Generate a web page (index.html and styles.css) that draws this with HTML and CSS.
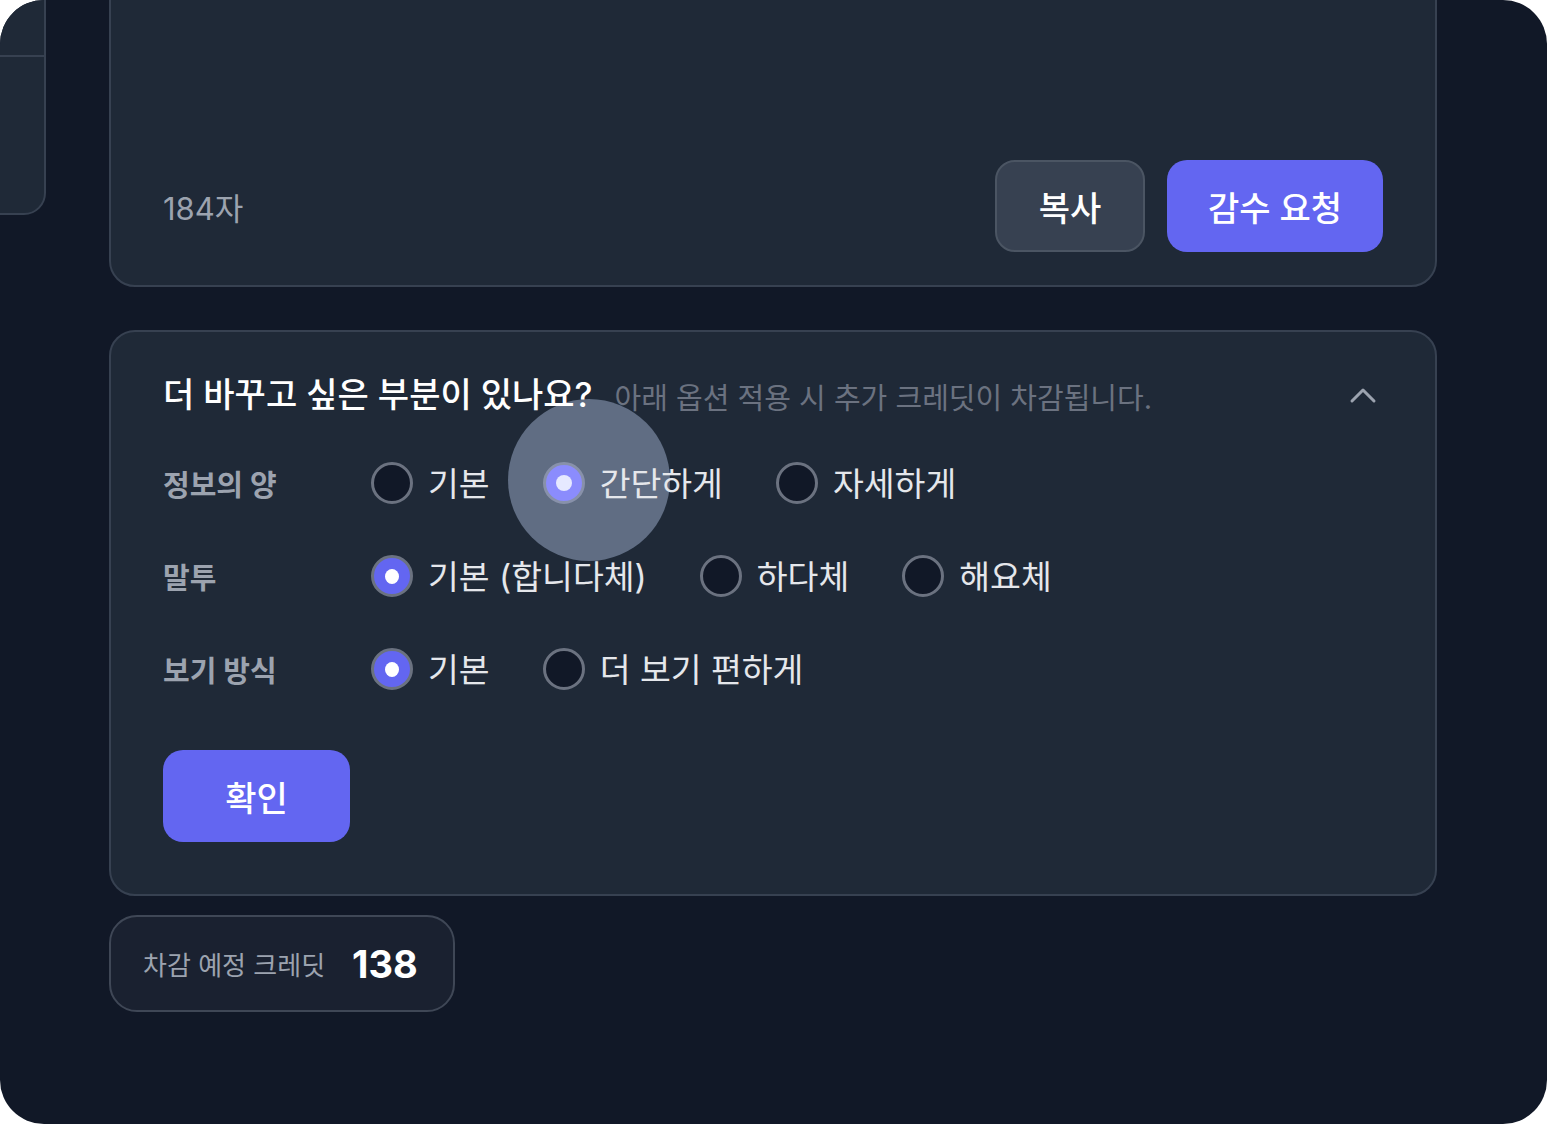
FILE: index.html
```html
<!DOCTYPE html>
<html lang="ko">
<head>
<meta charset="utf-8">
<title>감수 옵션</title>
<link rel="stylesheet" href="styles.css">
</head>
<body>
<div class="screen">
  <aside class="side">
    <div class="side-head"></div>
    <div class="side-body"></div>
  </aside>

  <main class="main">
    <section class="card editor">
      <div class="editor-text"></div>
      <div class="editor-foot">
        <span class="count">184자</span>
        <div class="actions">
          <button class="btn btn-ghost">복사</button>
          <button class="btn btn-primary btn-wide">감수 요청</button>
        </div>
      </div>
    </section>

    <section class="card options">
      <header class="options-head">
        <h2 class="options-title">더 바꾸고 싶은 부분이 있나요?</h2>
        <span class="options-note">아래 옵션 적용 시 추가 크레딧이 차감됩니다.</span>
        <svg class="chevron" width="28" height="18" viewBox="0 0 28 18" aria-hidden="true">
          <path d="M3 15 L14 4 L25 15" fill="none" stroke="#9ca3af" stroke-width="3" stroke-linecap="round" stroke-linejoin="round"/>
        </svg>
      </header>

      <div class="option-grid">
        <div class="option-label">정보의 양</div>
        <div class="option-set">
          <label class="opt"><span class="radio"></span><span class="opt-text">기본</span></label>
          <label class="opt opt-pressed"><span class="touch"></span><span class="radio on pressed"></span><span class="opt-text">간단하게</span></label>
          <label class="opt"><span class="radio"></span><span class="opt-text">자세하게</span></label>
        </div>

        <div class="option-label">말투</div>
        <div class="option-set">
          <label class="opt"><span class="radio on"></span><span class="opt-text">기본 (합니다체)</span></label>
          <label class="opt"><span class="radio"></span><span class="opt-text">하다체</span></label>
          <label class="opt"><span class="radio"></span><span class="opt-text">해요체</span></label>
        </div>

        <div class="option-label">보기 방식</div>
        <div class="option-set">
          <label class="opt"><span class="radio on"></span><span class="opt-text">기본</span></label>
          <label class="opt"><span class="radio"></span><span class="opt-text">더 보기 편하게</span></label>
        </div>
      </div>

      <button class="btn btn-primary btn-confirm">확인</button>
    </section>

    <div class="credit">
      <span class="credit-label">차감 예정 크레딧</span>
      <span class="credit-value">138</span>
    </div>
  </main>
</div>
</body>
</html>
```

FILE: styles.css
```css
* {
  box-sizing: border-box;
}

html, body {
  margin: 0;
  padding: 0;
  background: #ffffff;
}

body {
  font-family: Inter, "Noto Sans CJK KR", sans-serif;
  color: #e5e7eb;
}

.screen {
  width: 1547px;
  height: 1124px;
  background: #111827;
  border-radius: 44px;
  overflow: hidden;
  display: flex;
  align-items: flex-start;
  gap: 63px;
}

/* sidebar panel, mostly scrolled out of view */
.side {
  flex: 0 0 300px;
  margin-left: -254px;
  margin-top: -40px;
  height: 255px;
  background: #1f2937;
  border: 2px solid #374151;
  border-radius: 0 0 22px 22px;
  display: flex;
  flex-direction: column;
}

.side-head {
  height: 95px;
  border-bottom: 2px solid #374151;
}

.side-body {
  flex: 1;
}

.main {
  flex: 0 0 1328px;
  display: flex;
  flex-direction: column;
}

.card {
  background: #1f2937;
  border: 2px solid #374151;
  border-radius: 26px;
}

/* editor card */
.editor {
  margin-top: -60px;
  padding: 54px 52px 33px 52px;
}

.editor-text {
  height: 164px;
}

.editor-foot {
  display: flex;
  align-items: center;
  justify-content: space-between;
}

.count {
  font-size: 31px;
  color: #9ca3af;
}

.actions {
  display: flex;
  gap: 22px;
}

.btn {
  font-family: Inter, "Noto Sans CJK KR", sans-serif;
  font-size: 34px;
  font-weight: 500;
  color: #ffffff;
  height: 92px;
  border-radius: 20px;
  border: 0;
  padding: 0;
  display: inline-flex;
  align-items: center;
  justify-content: center;
}

.btn-ghost {
  width: 150px;
  background: #374151;
  border: 2px solid #4b5563;
}

.btn-primary {
  background: #6366f1;
}

.btn-wide {
  width: 216px;
}

/* options card */
.options {
  margin-top: 43px;
  padding: 41px 52px 52px 52px;
  display: flex;
  flex-direction: column;
  align-items: flex-start;
}

.options-head {
  width: 100%;
  display: flex;
  align-items: center;
  gap: 22px;
  height: 44px;
}

.options-title {
  margin: 0;
  font-size: 34px;
  font-weight: 500;
  color: #ffffff;
  line-height: 44px;
  position: relative;
  z-index: 2;
}

.options-note {
  font-size: 29px;
  color: #6b7280;
  margin-top: 2px;
}

.chevron {
  margin-left: auto;
  margin-right: 6px;
}

.option-grid {
  margin-top: 45px;
  display: grid;
  grid-template-columns: 208px auto;
  row-gap: 51px;
  align-items: center;
}

.option-label {
  font-size: 29px;
  font-weight: 700;
  color: #9ca3af;
}

.option-set {
  display: flex;
  align-items: center;
  gap: 53px;
  height: 42px;
}

.opt {
  position: relative;
  display: flex;
  align-items: center;
  gap: 15px;
}

.opt-text {
  position: relative;
  z-index: 1;
  font-size: 33.5px;
  line-height: 42px;
  color: #e5e7eb;
  margin-top: 2px;
}

.radio {
  position: relative;
  z-index: 1;
  width: 42px;
  height: 42px;
  border-radius: 50%;
  background: #111827;
  border: 3px solid #6b7280;
  display: flex;
  align-items: center;
  justify-content: center;
}

.radio.on {
  background: #6366f1;
}

.radio.on::after {
  content: "";
  width: 14px;
  height: 15px;
  border-radius: 50%;
  background: #ffffff;
}

.radio.pressed {
  background: #8b8cfd;
  border-color: #8891aa;
}

.radio.pressed::after {
  width: 16px;
  height: 16px;
  background: #e6e9ff;
}

/* touch feedback circle over the pressed option */
.touch {
  position: absolute;
  left: -35px;
  top: -62px;
  width: 162px;
  height: 162px;
  border-radius: 50%;
  background: rgba(150, 165, 195, 0.55);
  z-index: 0;
  pointer-events: none;
}

.btn-confirm {
  margin-top: 60px;
  width: 187px;
}

/* credit summary */
.credit {
  margin-top: 19px;
  width: 346px;
  height: 97px;
  background: #1a2130;
  border: 2px solid #3f4756;
  border-radius: 28px;
  display: flex;
  align-items: center;
  padding-left: 32px;
  gap: 27px;
}

.credit-label {
  font-size: 26px;
  color: #9ca3af;
}

.credit-value {
  font-size: 38px;
  font-weight: 700;
  color: #ffffff;
}
```
